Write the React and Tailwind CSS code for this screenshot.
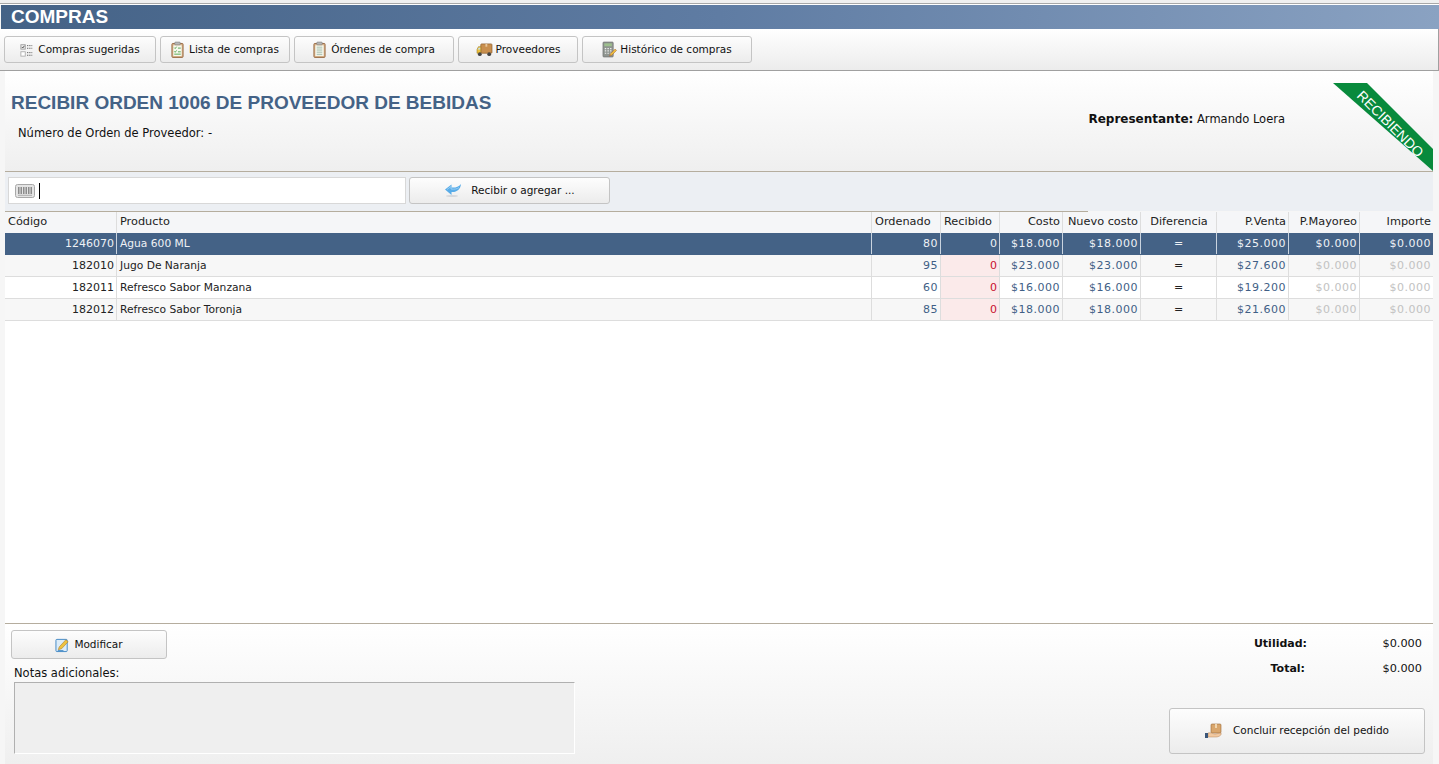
import React from "react";

const font = { fontFamily: '"DejaVu Sans", Verdana, sans-serif' };
const arial = { fontFamily: '"Liberation Sans", Arial, sans-serif' };

const ChecklistIcon = () => (
  <svg width="14" height="14" viewBox="0 0 16 16" className="shrink-0">
    <rect x="1" y="2" width="5" height="5" fill="#eee" stroke="#999" />
    <path d="M2 4.5l1.2 1.2L5 3.2" fill="none" stroke="#444" />
    <rect x="1" y="10" width="5" height="5" fill="#fff" stroke="#aaa" />
    <path d="M8 3h6M8 6h6M8 11h6M8 14h6" stroke="#555" strokeDasharray="1.5 1" />
  </svg>
);

const ClipboardIcon = ({ checks }) => (
  <svg width="13" height="17" viewBox="0 0 14 18" className="shrink-0">
    <rect x="1" y="2.5" width="12" height="15" rx="1" fill="#d8b48c" stroke="#94633c" />
    <rect x="2.5" y="4.5" width="9" height="11.5" fill="#f6f8ee" />
    <rect x="4" y="1" width="6" height="3" rx="1" fill="#b8b8b8" stroke="#777" strokeWidth=".6" />
    {checks ? (
      <path d="M3.5 7l1 1 1.5-2M3.5 11l1 1 1.5-2M7.5 7.5h3M7.5 11.5h3M3.5 14h7" fill="none" stroke="#3f9a3a" strokeWidth=".9" />
    ) : (
      <path d="M4 6.5h6M4 8.5h6M4 10.5h6M4 12.5h6M4 14.5h6" stroke="#9db8a8" strokeWidth=".9" />
    )}
  </svg>
);

const TruckIcon = () => (
  <svg width="17" height="15" viewBox="0 0 18 16" className="shrink-0">
    <rect x="5" y="2" width="12" height="10" rx="1" fill="#c98f4e" stroke="#8a5a28" strokeWidth=".7" />
    <path d="M10 2h2v3h-2z" fill="#e8c79a" />
    <path d="M5 5H2.5L1 8v4h4z" fill="#eec23f" stroke="#9a7a20" strokeWidth=".6" />
    <path d="M2.8 6H4.4v2H1.9z" fill="#bfe0ee" />
    <circle cx="4" cy="13" r="2" fill="#444" />
    <circle cx="14" cy="13" r="2" fill="#444" />
  </svg>
);

const CalculatorIcon = () => (
  <svg width="15" height="17" viewBox="0 0 16 18" className="shrink-0">
    <rect x="1" y="1" width="11" height="16" rx="1" fill="#8f9590" stroke="#666" strokeWidth=".6" />
    <rect x="2.5" y="2.5" width="8" height="3" fill="#9dbf8d" />
    <path d="M3 8h1.5M5.8 8h1.5M8.6 8h1.5M3 10.5h1.5M5.8 10.5h1.5M8.6 10.5h1.5M3 13h1.5M5.8 13h1.5M8.6 13h1.5" stroke="#eee" strokeWidth="1.2" />
    <path d="M8 16l1-2.5 5-5 1.5 1.5-5 5z" fill="#eec23f" stroke="#a0522d" strokeWidth=".5" />
  </svg>
);

const BarcodeIcon = () => (
  <svg width="20" height="14" viewBox="0 0 20 14" className="shrink-0">
    <rect x=".5" y=".5" width="19" height="13" rx="2" fill="#e4e4e4" stroke="#a8a8a8" />
    <path d="M3.5 3v7M5 3v7M6.5 3v7M8.5 3v7M10 3v7M11.5 3v7M13.5 3v7M15 3v7M16.5 3v7" stroke="#666" strokeWidth=".7" />
    <path d="M3 11.3h14" stroke="#888" strokeWidth=".6" />
  </svg>
);

const ArrowIcon = () => (
  <svg width="18" height="15" viewBox="0 0 18 15" className="shrink-0">
    <ellipse cx="8" cy="13" rx="6" ry="1" fill="#d5d8dc" />
    <path d="M1 6.5L7.5 1.5V4.5C11 5 14.5 4 17 1C16.5 6.5 12.5 9.5 7.5 9V12Z" fill="#58ace8" />
    <path d="M3 6.5L7 3.5V6C10.5 6.5 13 6 15 4.5" fill="none" stroke="#a5d4f5" strokeWidth=".8" />
  </svg>
);

const EditIcon = () => (
  <svg width="15" height="16" viewBox="0 0 16 16" className="shrink-0">
    <rect x="1" y="2" width="12" height="13" rx="1" fill="#dcecf8" stroke="#3f86c4" />
    <path d="M3.5 13l1-3 7-7.5 2.5 2-7 7.5z" fill="#eec23f" stroke="#a87a28" strokeWidth=".6" />
    <path d="M3 14h6" stroke="#3f86c4" />
  </svg>
);

const BoxHandIcon = () => (
  <svg width="18" height="16" viewBox="0 0 18 16" className="shrink-0">
    <rect x="6" y="1" width="10" height="9" rx="1" fill="#d9a66c" stroke="#9a6a35" strokeWidth=".6" />
    <path d="M10 1h2v4h-2z" fill="#f0d5ae" />
    <path d="M3 10c3-1 5 1 7 1l6-1c1 2-2 4-5 4H3z" fill="#f2c9a0" stroke="#b5845a" strokeWidth=".5" />
    <rect x="0" y="10" width="3" height="5" fill="#3b5678" />
  </svg>
);

const Button = ({ icon, label, className }) => (
  <button className={`flex items-center justify-center rounded-[3px] border border-[#c4c4c4] bg-gradient-to-b from-[#fdfdfd] to-[#ececec] text-[10.5px] text-[#111] ${className}`}>
    {icon}
    <span>{label}</span>
  </button>
);

const columns = "grid grid-cols-[112px_755px_69px_59px_63px_78px_76px_72px_71px_73px]";

const headers = [
  ["Código", "text-left"],
  ["Producto", "text-left"],
  ["Ordenado", "text-left"],
  ["Recibido", "text-left"],
  ["Costo", "text-right"],
  ["Nuevo costo", "text-right"],
  ["Diferencia", "text-center"],
  ["P.Venta", "text-right"],
  ["P.Mayoreo", "text-right"],
  ["Importe", "text-right"],
];

const rows = [
  { code: "1246070", name: "Agua 600 ML", ord: "80", cost: "$18.000", nuevo: "$18.000", venta: "$25.000" },
  { code: "182010", name: "Jugo De Naranja", ord: "95", cost: "$23.000", nuevo: "$23.000", venta: "$27.600" },
  { code: "182011", name: "Refresco Sabor Manzana", ord: "60", cost: "$16.000", nuevo: "$16.000", venta: "$19.200" },
  { code: "182012", name: "Refresco Sabor Toronja", ord: "85", cost: "$18.000", nuevo: "$18.000", venta: "$21.600" },
];

const Cell = ({ className, children }) => (
  <div className={`flex h-full items-center overflow-hidden border-r px-[2px] pt-[2px] whitespace-nowrap ${className}`}>{children}</div>
);

const Row = ({ row, index }) => {
  const selected = index === 0;
  const base = selected ? "border-[#c9d3df] text-[#eef1f5]" : "border-[#dddddd]";
  const num = `justify-end tracking-[0.5px] ${base} ${selected ? "" : "text-[#3f5f86]"}`;
  const muted = `justify-end tracking-[0.5px] ${base} ${selected ? "" : "text-[#c2c2c2]"}`;
  const bg = selected ? "bg-[#446286]" : index === 2 ? "bg-white" : "bg-[#f7f7f7]";
  return (
    <div className={`${columns} h-[22px] border-b text-[11px] ${selected ? "border-[#446286]" : "border-[#dddddd]"} ${bg}`}>
      <Cell className={`justify-end ${base} ${selected ? "" : "text-[#222]"}`}>{row.code}</Cell>
      <Cell className={`pl-[3px] text-[10.7px] ${base} ${selected ? "" : "text-[#222]"}`}>{row.name}</Cell>
      <Cell className={num}>{row.ord}</Cell>
      <Cell className={`justify-end ${base} ${selected ? "" : "bg-[#fbeaea] text-[#c8102e]"}`}>0</Cell>
      <Cell className={num}>{row.cost}</Cell>
      <Cell className={num}>{row.nuevo}</Cell>
      <Cell className={`justify-center ${base} ${selected ? "" : "text-[#222]"}`}>=</Cell>
      <Cell className={num}>{row.venta}</Cell>
      <Cell className={muted}>$0.000</Cell>
      <Cell className={`${muted} border-r-0`}>$0.000</Cell>
    </div>
  );
};

export default function App() {
  return (
    <div style={font} className="flex h-[764px] w-full flex-col overflow-hidden bg-[#f6f6f6] text-[#111]">
      {/* Top bar */}
      <div className="h-[3px] bg-[#f0f0f0]" />
      <div className="h-[2px] border-t border-[#a8a8a8] bg-white" />
      <div style={arial} className="ml-px flex h-[24px] items-center bg-gradient-to-r from-[#446286] via-[#5f7ca3] to-[#8aa2c2] pl-[10px] text-[19px] font-bold text-white">
        COMPRAS
      </div>

      {/* Toolbar */}
      <div className="flex h-[42px] gap-1 border-r border-b border-[#a0a0a0] bg-gradient-to-b from-white to-[#ececec] pt-[7px] pl-1">
        <Button className="h-[27px] w-[152px] gap-[4px]" icon={<ChecklistIcon />} label="Compras sugeridas" />
        <Button className="h-[27px] w-[130px] gap-[5px]" icon={<ClipboardIcon checks />} label="Lista de compras" />
        <Button className="h-[27px] w-[160px] gap-[5px]" icon={<ClipboardIcon />} label="Órdenes de compra" />
        <Button className="h-[27px] w-[120px] gap-[3px]" icon={<TruckIcon />} label="Proveedores" />
        <Button className="h-[27px] w-[170px] gap-[3px]" icon={<CalculatorIcon />} label="Histórico de compras" />
      </div>

      <div className="flex flex-1 flex-col pr-[6px] pl-[5px]">
        {/* Order header */}
        <div className="relative flex h-[101px] shrink-0 justify-between border-b border-[#b5ad9e] bg-gradient-to-b from-white to-[#efefef]">
          <div className="pt-[21px] pl-[6px]">
            <div style={arial} className="text-[19px] leading-[22px] font-bold text-[#446286]">
              RECIBIR ORDEN 1006 DE PROVEEDOR DE BEBIDAS
            </div>
            <div className="pt-[11px] pl-[7px] text-[11.5px]">Número de Orden de Proveedor: -</div>
          </div>
          <div className="pt-[39px] pr-[148px] text-[11.5px]">
            <b className="text-[12px]">Representante:</b> Armando Loera
          </div>
          <svg width="100" height="88" viewBox="0 0 100 88" className="absolute top-[12px] right-0">
            <polygon points="0,0 34,0 100,66 100,88" fill="#088a3c" />
            <text x="0" y="0" transform="translate(23 13.5) rotate(45)" fill="#fff" fontSize="14" style={arial}>
              RECIBIENDO
            </text>
          </svg>
        </div>

        {/* Search */}
        <div className="flex h-[39px] shrink-0 items-start gap-[3px] bg-[#eceff3] pt-[5px] pl-[3px]">
          <div className="flex h-[27px] w-[398px] items-center gap-[4px] border border-[#d8d8d8] bg-white pl-[6px]">
            <BarcodeIcon />
            <div className="h-[16px] w-px bg-black" />
          </div>
          <Button className="h-[27px] w-[201px] gap-[9px]" icon={<ArrowIcon />} label="Recibir o agregar ..." />
        </div>

        {/* Table */}
        <div className="h-px w-[1083px] shrink-0 bg-[#b5ad9e]" />
        <div className="flex-1 bg-white">
          <div className={`${columns} h-[21px] bg-[#f5f6f8] text-[11.3px] text-[#222]`}>
            {headers.map(([title, align], i) => (
              <div key={title} className={`border-[#dddddd] px-[3px] pr-[2px] leading-[20px] whitespace-nowrap ${i < headers.length - 1 ? "border-r" : ""} ${align}`}>
                {title}
              </div>
            ))}
          </div>
          {rows.map((row, i) => (
            <Row key={row.code} row={row} index={i} />
          ))}
        </div>

        {/* Footer */}
        <div className="flex h-[141px] shrink-0 justify-between border-t border-[#b5ad9e] bg-gradient-to-b from-white to-[#efefef]">
          <div className="pt-[6px] pl-[6px]">
            <Button className="h-[29px] w-[156px] gap-[4px]" icon={<EditIcon />} label="Modificar" />
            <div className="pt-[5px] pl-[3px] text-[11.5px] leading-[18px]">Notas adicionales:</div>
            <div className="ml-[3px] h-[72px] w-[561px] border border-t-[#b0b0b0] border-r-white border-b-white border-l-[#b0b0b0] bg-[#efefef]" />
          </div>
          <div className="flex flex-col items-end pr-[8px]">
            <div className="grid grid-cols-[auto_115px] items-center gap-y-[9px] pt-[12px] pr-[3px] text-[11.3px] leading-[16px]">
              <b className="text-right text-[11px]">Utilidad:</b>
              <span className="text-right">$0.000</span>
              <b className="pr-[2px] text-right text-[11px]">Total:</b>
              <span className="text-right">$0.000</span>
            </div>
            <Button className="mt-[31px] h-[46px] w-[256px] gap-[10px]" icon={<BoxHandIcon />} label="Concluir recepción del pedido" />
          </div>
        </div>
      </div>
    </div>
  );
}
